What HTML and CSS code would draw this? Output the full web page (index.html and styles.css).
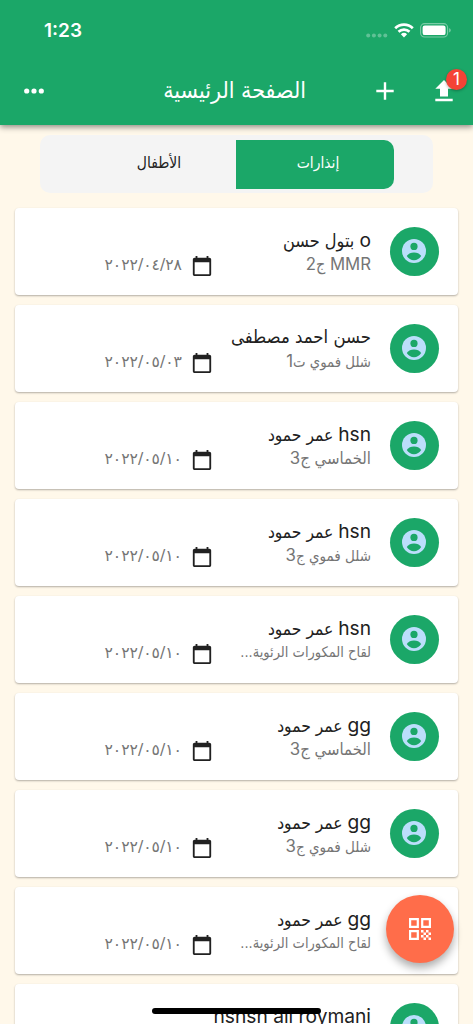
FILE: index.html
```html
<!DOCTYPE html>
<html lang="ar" dir="rtl">
<head>
<meta charset="utf-8">
<title>الصفحة الرئيسية</title>
<link rel="stylesheet" href="styles.css">
</head>
<body>
<svg class="defs" width="0" height="0">
  <symbol id="user" viewBox="0 0 24 24"><circle cx="12" cy="12" r="12" fill="#bbdefb"/><circle cx="12" cy="7.4" r="3.6" fill="#1ba768"/><path fill="#1ba768" d="M4.800 17C6.400 14.500 9 13.400 12 13.400s5.600 1.100 7.200 3.600C17.600 19.700 15 21.200 12 21.200s-5.600-1.500-7.200-4.200z"/></symbol>
  <symbol id="cal" viewBox="0 0 24 24"><path fill="#212121" d="M20 3h-1V1h-2v2H7V1H5v2H4c-1.1 0-2 .9-2 2v16c0 1.1.9 2 2 2h16c1.1 0 2-.9 2-2V5c0-1.1-.9-2-2-2zm0 18H4V8h16v13z"/></symbol>
</svg>
<div class="screen">
  <header class="header">
    <div class="status" dir="ltr">
      <span class="time">1:23</span>
      <div class="signals">
        <svg width="22" height="5" viewBox="0 0 22 5" fill="#fff" opacity=".3"><circle cx="2.2" cy="2.5" r="2"/><circle cx="7.9" cy="2.5" r="2"/><circle cx="13.6" cy="2.5" r="2"/><circle cx="19.3" cy="2.5" r="2"/></svg>
        <svg class="wifi" width="20" height="15" viewBox="0 0 20 15" fill="none" stroke="#fff" stroke-width="2.7"><path d="M1.200 5.300a12.600 12.600 0 0 1 17.600 0"/><path d="M4.500 8.800a7.900 7.900 0 0 1 11 0"/><path d="M10 14.400 6.900 11.300a4.500 4.500 0 0 1 6.200 0z" fill="#fff" stroke="none"/></svg>
        <svg class="battery" width="31" height="15" viewBox="0 0 31 15"><rect x=".6" y=".6" width="27" height="13.400" rx="4" fill="none" stroke="#fff" stroke-opacity=".42" stroke-width="1.100"/><rect x="2.600" y="2.500" width="23" height="9.600" rx="2.200" fill="#fff"/><path d="M29.200 5.200c2 .6 2 3.600 0 4.200z" fill="#fff" fill-opacity=".45"/></svg>
      </div>
    </div>
    <div class="toolbar">
      <div class="upload">
        <svg width="18" height="22" viewBox="0 0 18 22" fill="#fff"><path d="M5 16.500V8.700H.3L9 0l8.700 8.700H13v7.800zM.3 18.800h17.400v2.500H.3z"/></svg>
        <span class="badge">1</span>
      </div>
      <svg class="plus" width="18" height="18" viewBox="0 0 18 18" stroke="#fff" stroke-width="2.400"><path d="M9 .3v17.400M.3 9h17.400"/></svg>
      <h1 class="heading">الصفحة الرئيسية</h1>
      <svg class="dots" width="20" height="6" viewBox="0 0 20 6" fill="#fff"><circle cx="2.700" cy="3" r="2.600"/><circle cx="10" cy="3" r="2.600"/><circle cx="17.300" cy="3" r="2.600"/></svg>
    </div>
  </header>
  <div class="tabs"><div class="tab active">إنذارات</div><div class="tab">الأطفال</div></div>
  <main class="list" id="list"></main>
  <button class="fab" aria-label="QR">
    <svg width="24" height="24" viewBox="0 0 24 24"><g fill="none" stroke="#fff" stroke-width="2.200"><path d="M2.100 2.100h7.700v7.700H2.100zM14.200 2.100h7.700v7.700h-7.700zM2.100 14.200h7.700v7.700H2.100z"/></g><path fill="#fff" d="M13 13h2.500v2.500H13zM18 13h2.500v2.500H18zM15.500 15.500H18V18h-2.500zM20.500 15.500H23V18h-2.500zM13 18h2.500v2.500H13zM18 18h2.500v2.500H18zM15.500 20.500H18V23h-2.500zM20.500 20.500H23V23h-2.500z"/></svg>
  </button>
  <div class="home"></div>
</div>
<script src="list.js"></script>
</body>
</html>
```
FILE: list.js
```js
const rows = [
  ['o', 'بتول حسن', 18, '<i>MMR</i> ج<i>2</i>', 16, '٢٠٢٢/٠٤/٢٨'],
  ['', 'حسن احمد مصطفى', 18.4, 'شلل فموي ت<i>1</i>', 14.8, '٢٠٢٢/٠٥/٠٣'],
  ['hsn', 'عمر حمود', 17.3, 'الخماسي ج<i>3</i>', 16.6, '٢٠٢٢/٠٥/١٠'],
  ['hsn', 'عمر حمود', 17.3, 'شلل فموي ج<i>3</i>', 15, '٢٠٢٢/٠٥/١٠'],
  ['hsn', 'عمر حمود', 17.3, 'لقاح المكورات الرئوية...', 14.5, '٢٠٢٢/٠٥/١٠'],
  ['gg', 'عمر حمود', 17.3, 'الخماسي ج<i>3</i>', 16.6, '٢٠٢٢/٠٥/١٠'],
  ['gg', 'عمر حمود', 17.3, 'شلل فموي ج<i>3</i>', 15, '٢٠٢٢/٠٥/١٠'],
  ['gg', 'عمر حمود', 17.3, 'لقاح المكورات الرئوية...', 14.5, '٢٠٢٢/٠٥/١٠'],
  ['hshsh ali roymani', '', 17.3, '', 15, '']
];
document.getElementById('list').innerHTML = rows.map(([latin, name, nameSize, sub, subSize, date]) => `
  <article class="card">
    <div class="avatar"><svg width="24" height="24"><use href="#user"/></svg></div>
    <div class="info">
      <div class="name" style="font-size:${nameSize}px">${latin ? `<i>${latin}</i> ` : ''}${name}</div>
      <div class="sub" style="font-size:${subSize}px">${sub}</div>
    </div>
    ${date ? `<svg class="cal" width="22" height="22"><use href="#cal"/></svg><bdo class="date" dir="ltr">${date}</bdo>` : ''}
  </article>`).join('');
```
FILE: styles.css
```css
* { box-sizing: border-box; }
body { margin: 0; background: #fff8ea; font-family: "DejaVu Sans Condensed", "DejaVu Sans", sans-serif; font-stretch: condensed; }
i { font-family: Inter, sans-serif; font-style: normal; }
svg { display: block; flex: none; }
.defs { position: absolute; }
.screen { position: relative; width: 473px; height: 1024px; overflow: hidden; }
.header { position: relative; height: 125px; background: #1ba768; color: #fff; box-shadow: 0 2px 6px rgba(0,0,0,.45); }
.status { display: flex; justify-content: space-between; height: 60px; padding: 0 22px 0 44px; align-items: center; }
.time { font: 600 19px/24px Inter, sans-serif; padding-top: 1px; }
.signals { display: flex; align-items: center; }
.signals > :first-child { margin-top: 10px; }
.wifi { margin: 0 6px 0 6px; }
.toolbar { display: flex; height: 62px; align-items: center; padding-right: 20px; }
.upload { position: relative; width: 18px; margin-top: -1px; }
.badge { position: absolute; left: 11px; top: -11px; width: 21px; height: 21px; border-radius: 50%; background: #f44336; font: 17px/21px Inter, sans-serif; text-align: center; box-shadow: 0 1px 3px rgba(0,0,0,.3); }
.plus { margin-right: 41px; }
.heading { margin: -3px 70px 0 0; width: 143px; font-size: 23px; font-weight: 400; line-height: 30px; white-space: nowrap; }
.dots { margin-right: 119px; }
.tabs { display: flex; width: 393px; height: 58px; margin: 10px 40px 0; padding: 4.500px 39px 4.500px 0; background: #f4f4f4; border-radius: 10px; }
.tab { width: 158px; height: 49px; line-height: 46px; text-align: center; font-size: 15.500px; color: #212121; }
.tab:last-child { padding-left: 4px; }
.tab.active { color: #fff; padding-left: 6px; background: #1ba768; border-radius: 0 10px 10px 0; }
.list { display: flex; flex-direction: column; gap: 10px; padding: 15px 15px 0; }
.card { display: flex; height: 87px; flex: none; padding: 19px 19.500px 0 0; background: #fff; border-radius: 4px; box-shadow: 0 1px 2px rgba(0,0,0,.3); }
.avatar { display: grid; place-items: center; flex: none; width: 49px; height: 49px; padding-bottom: 1px; border-radius: 50%; background: #1ba768; }
.info { width: 135px; margin-right: 18.500px; flex: none; white-space: nowrap; }
.name { height: 25px; line-height: 26px; color: #212121; }
.name i { font-size: 19.200px; }
.sub { height: 24px; line-height: 25px; color: #757575; }
.sub i { font-size: 16.800px; }
.cal { margin: 28px 23px 0 0; }
.date { margin: 26px 9px 0 0; font-family: "DejaVu Sans", sans-serif; font-stretch: normal; font-size: 15.600px; line-height: 24px; color: #757575; }
.fab { position: absolute; left: 385.500px; top: 895px; width: 68px; height: 68px; padding: 0; display: grid; place-items: center; border: 0; border-radius: 50%; background: #ff6d4a; box-shadow: 0 5px 9px rgba(0,0,0,.32); }
.home { position: absolute; left: 152px; top: 1008px; width: 169px; height: 6px; border-radius: 3px; background: #000; }
```
